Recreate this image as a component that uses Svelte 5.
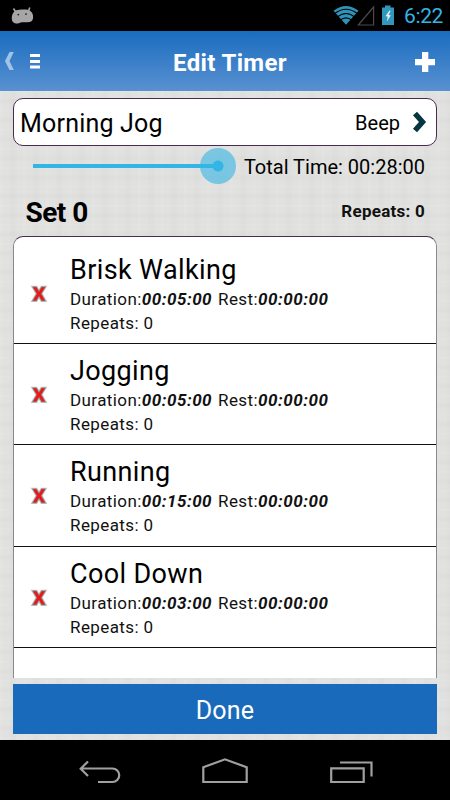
<script>
    let timerName = $state('Morning Jog');
    let sound = $state('Beep');
    let intervals = $state([
        { name: 'Brisk Walking', duration: '00:05:00', rest: '00:00:00', repeats: 0 },
        { name: 'Jogging', duration: '00:05:00', rest: '00:00:00', repeats: 0 },
        { name: 'Running', duration: '00:15:00', rest: '00:00:00', repeats: 0 },
        { name: 'Cool Down', duration: '00:03:00', rest: '00:00:00', repeats: 0 }
    ]);

    function seconds(time) {
        const [h, m, s] = time.split(':').map(Number);
        return h * 3600 + m * 60 + s;
    }

    function format(total) {
        const parts = [Math.floor(total / 3600), Math.floor(total / 60) % 60, total % 60];
        return parts.map(n => String(n).padStart(2, '0')).join(':');
    }

    let totalTime = $derived(
        format(intervals.reduce((sum, i) => sum + seconds(i.duration) + seconds(i.rest), 0))
    );

    function remove(index) {
        intervals.splice(index, 1);
    }
</script>

<div class="screen">
    <div class="status">
        <svg class="droid" width="24" height="18" viewBox="0 0 24 18">
            <path d="M2.500 1.500L4.800 5M18.700 .6L17.500 4.200" stroke="#a6a6a6" stroke-width="1.600" />
            <path d="M4.500 3.600C8 2.600 14 2.200 17.500 3C21.500 4.500 22.500 8 22 11.500C21.500 14.500 19 15.500 16 15.300C13 15.300 11.500 15 8.500 15.900C4.500 17.300 1 16 .8 12C.6 9 1.500 5.600 4.500 3.600Z" fill="#a6a6a6" />
            <circle cx="7.300" cy="7.600" r=".9" fill="#222" />
            <circle cx="15" cy="7.100" r=".9" fill="#222" />
        </svg>
        <div class="tray">
            <svg width="62" height="22" viewBox="0 0 62 22">
                <path d="M.5 6.800Q13 -2.600 25.500 6.800L13 20.800Z" fill="#2d93b8" />
                <g fill="none" stroke="#000" stroke-width="1.100">
                    <path d="M1.500 9.800Q13 .8 24.500 9.800" />
                    <path d="M4 13.200Q13 5.800 22 13.200" />
                    <path d="M7 16.400Q13 11.400 19 16.400" />
                </g>
                <path d="M25.300 21L40.600 3V21Z" fill="none" stroke="#4a4a4a" stroke-width="1.200" />
                <path d="M49 3.500H52V1.500H57.500V3.500H61V21H49Z" fill="#3197bd" />
                <path d="M56.500 6.500L52.500 12.300L54.800 12.600L53.800 17.500L57.800 11.200L55.500 10.900L57.500 7Z" fill="#e6f4f9" />
            </svg>
            <span class="clock">6:22</span>
        </div>
    </div>

    <header>
        <svg width="42" height="20" viewBox="0 0 42 20">
            <path d="M9.500 1H13.800L9.500 10L13.800 19H9.500L5 10Z" fill="#a3c3e6" />
            <path d="M30 3H40V6H30ZM30 9H40V12H30ZM30 14.500H40V17.500H30Z" fill="#fff" />
        </svg>
        <h1>Edit Timer</h1>
        <svg class="plus" width="20" height="20" viewBox="0 0 20 20">
            <path d="M7 0H13.300V7H20V13.300H13.300V20H7V13.300H0V7H7Z" fill="#fff" />
        </svg>
    </header>

    <main>
        <div class="name-card">
            <span class="name">{timerName}</span>
            <span class="sound">{sound}</span>
            <svg width="17" height="22" viewBox="0 0 17 22">
                <path d="M4 2.500L11.500 11L4 19.500" fill="none" stroke="#073642" stroke-width="5.400" />
            </svg>
        </div>

        <div class="volume-row">
            <div class="slider">
                <div class="track"></div>
                <div class="thumb"></div>
            </div>
            <span class="total">Total Time: {totalTime}</span>
        </div>

        <div class="set-row">
            <h2>Set 0</h2>
            <span class="set-repeats">Repeats: 0</span>
        </div>

        <div class="list">
            {#each intervals as interval, index}
                <div class="item">
                    <button class="delete" aria-label="Delete" onclick={() => remove(index)}>
                        <svg width="18" height="20" viewBox="0 0 18 20">
                            <path class="halo" d="M2 2.500H6.600L9 6.600L11.400 2.500H16L11.700 9.700L16 17.200H11.400L9 13L6.600 17.200H2L6.300 9.700Z" />
                            <path d="M3 3.300H6.200L9 8L11.800 3.300H15L10.800 9.700L15 16.400H11.800L9 11.600L6.200 16.400H3L7.200 9.700Z" fill="#f01616" />
                        </svg>
                    </button>
                    <div class="details">
                        <div class="title">{interval.name}</div>
                        <div class="line">Duration:<b>{interval.duration}</b> <span class="rest">Rest:<b>{interval.rest}</b></span></div>
                        <div class="line">Repeats: {interval.repeats}</div>
                    </div>
                </div>
            {/each}
        </div>

        <button class="done">Done</button>
    </main>

    <nav>
        <svg width="450" height="60" viewBox="0 0 450 60">
            <g fill="none" stroke="#a0a0a0" stroke-width="2.200">
                <path d="M88 21.500L80.700 28.800L88 36M80.500 28.500H112.500A6.700 6.700 0 0 1 112.500 42H98" />
                <path d="M203.300 42V27.300L225 19.300L246.700 27.300V42Z" />
                <path d="M331.200 28.300H363.700V42H331.200ZM340 22.500H371.500V36.500" />
            </g>
        </svg>
    </nav>
</div>

<style>
    :global(body) {
        margin: 0;
        background: #000;
    }

    .screen {
        display: flex;
        flex-direction: column;
        width: 450px;
        height: 800px;
        overflow: hidden;
        font-family: Roboto, sans-serif;
        color: #000;
    }

    .status {
        display: flex;
        justify-content: space-between;
        height: 31px;
        padding: 0 7px 0 11px;
        box-sizing: border-box;
        background: #000;
    }

    .droid {
        margin-top: 7px;
    }

    .tray {
        display: flex;
        gap: 9px;
        padding-top: 4px;
    }

    .clock {
        font-size: 21px;
        line-height: 25px;
        letter-spacing: -0.4px;
        color: #33b5e5;
    }

    .tray svg {
        margin-right: 0.5px;
    }

    header {
        display: flex;
        align-items: center;
        justify-content: space-between;
        height: 60px;
        padding-right: 15px;
        background: linear-gradient(#1a6cbf, #5991d1);
        box-sizing: border-box;
    }

    h1 {
        margin: 4px 0 0;
        padding-left: 3px;
        width: 340px;
        text-align: center;
        font-size: 24px;
        line-height: 28px;
        letter-spacing: 0.35px;
        color: #fff;
    }

    .plus {
        margin-top: 2px;
    }

    main {
        flex: 1;
        display: flex;
        flex-direction: column;
        padding: 7px 13px 6px;
        min-height: 0;
        background-color: #e1e1df;
        background-image:
            repeating-linear-gradient(90deg, rgba(255, 255, 255, 0.07) 0 2px, transparent 3px 9px, rgba(0, 0, 0, 0.01) 11px 15px, transparent 17px 23px),
            repeating-linear-gradient(rgba(255, 255, 255, 0.07) 0 1px, transparent 2px 7px, rgba(0, 0, 0, 0.01) 9px 12px, transparent 13px 19px);
    }

    .name-card {
        display: flex;
        align-items: center;
        height: 48px;
        padding: 0 8px 0 6px;
        box-sizing: border-box;
        background: #fff;
        border: 1px solid #4b2a52;
        border-radius: 10px;
    }

    .name {
        flex: 1;
        font-size: 25px;
        letter-spacing: 0.2px;
        padding-top: 3px;
    }

    .sound {
        font-size: 20px;
        margin-right: 11px;
        padding-top: 1px;
    }

    .volume-row {
        display: flex;
        align-items: center;
        justify-content: space-between;
        height: 40px;
        padding: 0 12px 0 19.500px;
    }

    .slider {
        display: flex;
        align-items: center;
        width: 203px;
    }

    .track {
        flex: 1;
        height: 4px;
        margin-right: -18px;
        background: #33b5e5;
    }

    .thumb {
        width: 36px;
        height: 36px;
        border-radius: 50%;
        background: radial-gradient(#33b5e5 5px, rgba(51, 181, 229, 0.6) 6px);
    }

    .total {
        font-size: 20px;
        padding-top: 2px;
    }

    .set-row {
        display: flex;
        align-items: center;
        justify-content: space-between;
        height: 50px;
        padding: 0 12px 0 12.500px;
    }

    h2 {
        margin: 3px 0 0;
        font-size: 28px;
        letter-spacing: -0.5px;
    }

    .set-repeats {
        font-size: 17px;
        font-weight: bold;
        letter-spacing: 0.25px;
        color: #111;
    }

    .list {
        height: 442px;
        box-sizing: border-box;
        padding-top: 6px;
        background: #fff;
        border: 1px solid #4b2a52;
        border-bottom: none;
        border-radius: 10px 10px 0 0;
        border-left-color: #8f8494;
        border-right-color: #8f8494;
        overflow: hidden;
    }

    .item {
        display: flex;
        height: 101.200px;
        box-sizing: border-box;
        border-bottom: 1px solid #111;
    }

    .delete {
        width: 56px;
        padding: 5px 0 0 16px;
        border: none;
        background: none;
        text-align: left;
        cursor: pointer;
    }

    .halo {
        fill: #777;
        stroke: #999;
        stroke-opacity: 0.6;
        stroke-width: 1.6;
    }

    .title {
        padding-top: 10px;
        font-size: 27px;
        line-height: 34px;
        letter-spacing: 0.37px;
    }

    .line {
        font-size: 17px;
        line-height: 24px;
        letter-spacing: 0.4px;
        white-space: nowrap;
        color: #111;
    }

    .line b {
        font-style: italic;
        letter-spacing: 0.52px;
    }

    .rest {
        margin-left: 1.300px;
    }

    .done {
        height: 50px;
        margin-top: 6px;
        border: none;
        background: #1a6abc;
        color: #fff;
        font-family: inherit;
        font-size: 25px;
        letter-spacing: 0.2px;
        padding-top: 3px;
    }

    nav {
        height: 60px;
        background: #000;
    }
</style>
